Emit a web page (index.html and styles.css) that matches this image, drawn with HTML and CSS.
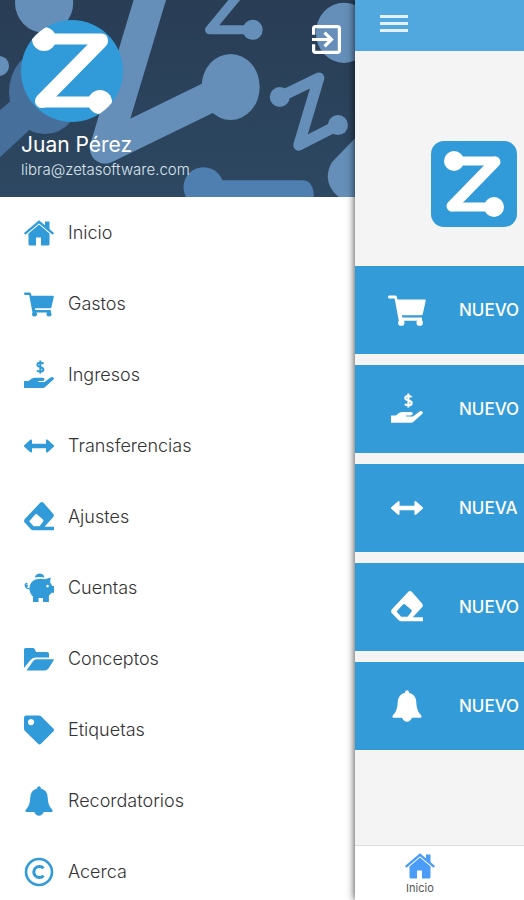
FILE: index.html
```
<!DOCTYPE html>
<html lang="es">
<head>
  <meta charset="UTF-8" />
  <meta name="viewport" content="width=device-width, initial-scale=1.0"/>
  <title>Libra</title>
  <link rel="stylesheet" href="styles.css">
</head>
<body>

  <!-- Shared icons -->
  <svg class="sprite" aria-hidden="true">
    <symbol id="home" viewBox="0 0 30 30">
      <path d="M15 6.500 4.500 15.500V26q0 1.500 1.500 1.500h6v-8h5v8h7q1.500 0 1.500-1.500V15.500z"/>
      <path d="M1.300 15.300 15 3.800 28.700 15.300" fill="none" stroke="currentColor" stroke-width="2.200" stroke-linecap="round"/>
      <path d="M21 3.500h4.500v9L21 8.500z"/>
    </symbol>
    <symbol id="cart" viewBox="0 0 30 30">
      <path d="M1.200 3.500h4.500q1 0 1.200 1l.6 2.200H29q1 0 .8 1L27.500 18q-.2 1.200-1.300 1.200H11l.3 1.800h15.500v2.400H9.500q-1 0-1.200-1L5.200 6H1.200Q0 6 0 4.700t1.200-1.200z"/>
      <circle cx="10.500" cy="25" r="2.500"/><circle cx="25" cy="25" r="2.500"/>
    </symbol>
    <symbol id="income" viewBox="0 0 30 30">
      <path d="M19.400 3.800C18.500 2.600 13.400 2 13.400 4.800c0 3 6 1.600 6 4.600 0 2.800-5 2.500-6.400.9M16.300.5v13" fill="none" stroke="currentColor" stroke-width="2"/>
      <path d="M0 21h4.500l3-2.300q1.400-1 3.200-1h8q1.800 0 1.800 1.500T18.700 21h-4.500v1h6.300l6-4.500q1.700-1.200 3 0 1 1.200-.3 2.300l-7.500 6.700q-1.500 1.500-3.500 1.500H0z"/>
    </symbol>
    <symbol id="transfer" viewBox="0 0 30 30">
      <path d="M.3 14.200 6.300 8.800q1.700-1 1.700.8v3.200h14V9.600q0-1.800 1.700-.8l6 5.400q.8.800 0 1.600l-6 5.400q-1.700 1-1.700-.8v-3.200H8v3.200q0 1.800-1.700.8l-6-5.400q-.8-.8 0-1.600z"/>
    </symbol>
    <symbol id="eraser" viewBox="0 0 30 30">
      <path fill-rule="evenodd" d="M19.500.7q-1.700-1.300-3.300 0L.9 17q-1.700 2 0 3.800l6 6.500q1 1 2.400 1H30v-3.600h-9.500l8.600-9.500q1.500-1.700 0-3.400zM11.200 12.600q1-1 2 0L19 17.500q.8 1 0 2.200l-3.500 4.500H9.600L5.200 19.200z"/>
    </symbol>
    <symbol id="piggy" viewBox="0 0 30 30">
      <path d="M10.800 4.500C12-1 19.500-1 20.500 4.500q-4.800-1.200-9.700 0z"/>
      <path fill-rule="evenodd" d="M11.500 6.500q4.500-1.300 9.500-.3l5.700-1.700-.6 4.900q1.500 1.500 2 3.600H30v6.800h-2.500q-1 1.500-2.600 2.600V29H19v-4h-4.500v4H9v-5.600Q5 20 5.500 14.500q.8-6 6-8zM23.500 11.800a1.300 1.300 0 1 0 .1 0z"/>
      <path d="M3.500 10.500C.8 10.200.5 12.700 2 13.500c1 .6 2-.8 1-1.400C1 12 .8 15.700 5.700 15.800" fill="none" stroke="currentColor" stroke-width="1.200"/>
    </symbol>
    <symbol id="folder" viewBox="0 0 30 30">
      <path d="M0 24V5.500Q0 4 1.500 4H9q1.200 0 1.700 1l1.300 3h11q2 0 2 2v3.500H11.500q-3.200 0-5 2.500z"/>
      <path d="M2.500 26.500 8.800 17.500q1.500-2.200 4-2.200H29.200q1.200 0 .4 1.300l-5 7.600q-1.500 2.300-4 2.300z"/>
    </symbol>
    <symbol id="tag" viewBox="0 0 30 30">
      <path fill-rule="evenodd" d="M0 2.500Q0 .5 2 .5h13q1.300 0 2.300 1L29.500 13.700q1.300 1.300 0 2.600L17 28.800q-1.500 1.500-3 0L1 16q-1-1-1-2.300zM7 4a3.100 3.100 0 1 0 .1 0z"/>
    </symbol>
    <symbol id="bell" viewBox="0 0 30 30">
      <path d="M15 .3q1.700 0 2 2.300 6.300 1.700 6.700 8.700.3 7.700 3.300 11 2.700 2.800 1 3.700h-8.300q-1.700 3.800-4.700 3.800T10.300 26H2q-1.700-.9 1-3.700 3-3.300 3.300-11 .4-7 6.700-8.700.3-2.300 2-2.300z"/>
    </symbol>
    <symbol id="about" viewBox="0 0 30 30">
      <circle cx="15" cy="15" r="13" fill="none" stroke="currentColor" stroke-width="2.600"/>
      <path d="M19.500 11.200A5.600 5.600 0 1 0 19.500 18.800" fill="none" stroke="currentColor" stroke-width="3"/>
    </symbol>
  </svg>

  <div class="app">
    <aside class="drawer">
      <header class="profile">
        <svg class="profile-bg" viewBox="0 0 354 197" preserveAspectRatio="xMidYMid slice" aria-hidden="true">
          <g class="shape-dark">
            <ellipse cx="45" cy="92" rx="36" ry="42"/>
            <path d="M0 110 13 99 40 120 0 157z"/>
          </g>
          <g class="shape-mid">
            <circle cx="203" cy="187" r="20"/>
            <path d="M205 180h96q12 0 12 17H205z"/>
          </g>
          <g class="shape-light">
            <ellipse cx="44" cy="3" rx="29" ry="30"/>
            <circle cx="-1" cy="66" r="10"/>
            <ellipse cx="230" cy="87" rx="29" ry="33"/>
            <path d="M151-5 105 148 230 87" class="line" stroke-width="31"/>
            <path d="M238-5 209 30H252" class="line" stroke-width="9"/>
            <circle cx="252" cy="30" r="10"/>
            <ellipse cx="343" cy="33" rx="28" ry="30"/>
            <path d="M279 97 318 78 298 145 337 125" class="line" stroke-width="11"/>
            <circle cx="279" cy="97" r="10"/>
            <circle cx="337" cy="125" r="10"/>
            <path d="M356 136 331 162Q320 182 338 197h18z"/>
          </g>
        </svg>
        <button class="logout" type="button" aria-label="Salir">
          <svg viewBox="3 3 18 18"><path d="M10.090 15.590 11.500 17l5-5-5-5-1.410 1.410L12.670 11H3v2h9.670l-2.580 2.590zM19 3H5c-1.110 0-2 .9-2 2v4h2V5h14v14H5v-4H3v4c0 1.100.89 2 2 2h14c1.100 0 2-.9 2-2V5c0-1.100-.9-2-2-2z"/></svg>
        </button>
        <svg class="avatar" viewBox="0 0 102 102" aria-hidden="true">
          <clipPath id="round"><circle cx="51" cy="51" r="51"/></clipPath>
          <g clip-path="url(#round)">
            <rect class="logo-back" width="102" height="102"/>
            <path class="logo-line" d="M24 19H81L20 82H77" stroke-width="11"/>
            <path class="logo-line" d="M80 21 21 81" stroke-width="14"/>
            <circle class="logo-dot" cx="23" cy="19" r="12"/>
            <circle class="logo-dot" cx="79" cy="82" r="12"/>
          </g>
        </svg>
        <h1 class="name">Juan Pérez</h1>
        <p class="email">libra@zetasoftware.com</p>
      </header>

      <nav class="menu">
        <a href="#inicio"><svg class="icon"><use href="#home"/></svg>Inicio</a>
        <a href="#gastos"><svg class="icon"><use href="#cart"/></svg>Gastos</a>
        <a href="#ingresos"><svg class="icon"><use href="#income"/></svg>Ingresos</a>
        <a href="#transferencias"><svg class="icon"><use href="#transfer"/></svg>Transferencias</a>
        <a href="#ajustes"><svg class="icon"><use href="#eraser"/></svg>Ajustes</a>
        <a href="#cuentas"><svg class="icon"><use href="#piggy"/></svg>Cuentas</a>
        <a href="#conceptos"><svg class="icon"><use href="#folder"/></svg>Conceptos</a>
        <a href="#etiquetas"><svg class="icon"><use href="#tag"/></svg>Etiquetas</a>
        <a href="#recordatorios"><svg class="icon"><use href="#bell"/></svg>Recordatorios</a>
        <a href="#acerca"><svg class="icon"><use href="#about"/></svg>Acerca</a>
      </nav>
    </aside>

    <main class="page">
      <div class="topbar">
        <button class="burger" type="button" aria-label="Menú">
          <span></span><span></span><span></span>
        </button>
      </div>

      <div class="brand">
        <svg class="logo" viewBox="0 0 86 86" aria-hidden="true">
          <rect class="logo-back" width="86" height="86" rx="13"/>
          <path class="logo-line" d="M23 20H64L21 66H63" stroke-width="9"/>
          <path class="logo-line" d="M64 21 21 65" stroke-width="11"/>
          <circle class="logo-dot" cx="23" cy="20" r="10"/>
          <circle class="logo-dot" cx="63" cy="66" r="10"/>
        </svg>
      </div>

      <div class="actions">
        <button type="button"><svg class="icon wide"><use href="#cart"/></svg>NUEVO</button>
        <button type="button"><svg class="icon"><use href="#income"/></svg>NUEVO</button>
        <button type="button"><svg class="icon"><use href="#transfer"/></svg>NUEVA</button>
        <button type="button"><svg class="icon"><use href="#eraser"/></svg>NUEVO</button>
        <button type="button"><svg class="icon"><use href="#bell"/></svg>NUEVO</button>
      </div>

      <nav class="tabs">
        <a href="#inicio"><svg class="icon"><use href="#home"/></svg>Inicio</a>
      </nav>
    </main>
  </div>

</body>
</html>
```
FILE: styles.css
```
* {
  box-sizing: border-box;
}

body {
  margin: 0;
  font-family: Inter, 'Liberation Sans', sans-serif;
  background: #fff;
  color: #444;
}

.sprite {
  display: none;
}

.app {
  display: grid;
  grid-template-columns: 21fr 10fr;
  height: 100vh;
  overflow: hidden;
}

.icon {
  width: 30px;
  height: 30px;
  flex-shrink: 0;
  fill: currentColor;
}

/* Drawer */
.drawer {
  min-width: 0;
  overflow-y: auto;
  scrollbar-width: none;
}

.profile {
  position: relative;
  padding: 20px 21px 16px;
  background: linear-gradient(#293d55, #2d4862);
  color: #fff;
  overflow: hidden;
}

.profile-bg {
  position: absolute;
  inset: 0;
  width: 100%;
  height: 100%;
}

.shape-dark {
  fill: #466f9c;
}

.shape-mid {
  fill: #4f7fb1;
}

.shape-light {
  fill: #658fb8;
}

.line {
  fill: none;
  stroke: #658fb8;
  stroke-linecap: round;
  stroke-linejoin: round;
}

.avatar {
  position: relative;
  display: block;
  width: 102px;
  height: 102px;
}

.logo-back {
  fill: #309bd8;
}

.logo-line {
  fill: none;
  stroke: #fff;
  stroke-linecap: round;
  stroke-linejoin: round;
}

.logo-dot {
  fill: #fff;
}

.name {
  position: relative;
  margin: 9px 0 0;
  font-size: 21px;
  font-weight: 400;
  line-height: 28px;
}

.email {
  position: relative;
  margin: 0;
  font-size: 15px;
  font-weight: 300;
  line-height: 22px;
  color: #dde5ee;
}

.logout {
  position: absolute;
  top: 25px;
  right: 14px;
  z-index: 1;
  padding: 0;
  border: none;
  background: none;
  cursor: pointer;
}

.logout svg {
  display: block;
  width: 29px;
  height: 29px;
  fill: #fff;
}

.menu a {
  display: flex;
  align-items: center;
  gap: 14px;
  height: 71px;
  padding: 0 24px;
  font-size: 18px;
  font-weight: 300;
  color: #333;
  text-decoration: none;
}

.menu .icon {
  color: #309bd8;
}

/* Page behind the drawer */
.page {
  display: flex;
  flex-direction: column;
  min-width: 0;
  z-index: 1;
  background: #f4f4f4;
  box-shadow: 0 0 8px rgba(0, 0, 0, 0.8);
}

.topbar {
  padding: 15px 25px;
  height: 51px;
  background: #50a8de;
}

.burger {
  display: flex;
  flex-direction: column;
  gap: 4px;
  width: 28px;
  padding: 0;
  border: none;
  background: none;
  cursor: pointer;
}

.burger span {
  width: 100%;
  height: 3px;
  background: #e3f1fb;
}

.brand {
  padding: 90px 0 39px 76px;
}

.logo {
  display: block;
  width: 86px;
  height: 86px;
}

.actions {
  display: flex;
  flex-direction: column;
  gap: 11px;
}

.actions button {
  display: flex;
  align-items: center;
  gap: 33px;
  height: 88px;
  padding: 0 0 0 33px;
  border: none;
  background: #329bd8;
  color: #fff;
  font-family: Inter, 'Liberation Sans', sans-serif;
  font-size: 17px;
  font-weight: 500;
  white-space: nowrap;
  cursor: pointer;
}

.actions .icon {
  width: 38px;
  height: 32px;
}

.actions .wide {
  height: 38px;
}

.tabs {
  margin-top: auto;
  padding: 5px 50px;
  border-top: 1px solid #ddd;
  background: #fff;
}

.tabs a {
  display: inline-flex;
  flex-direction: column;
  align-items: center;
  font-size: 11px;
  line-height: 14px;
  color: #555;
  text-decoration: none;
}

.tabs .icon {
  color: #4a9cf8;
}
```
